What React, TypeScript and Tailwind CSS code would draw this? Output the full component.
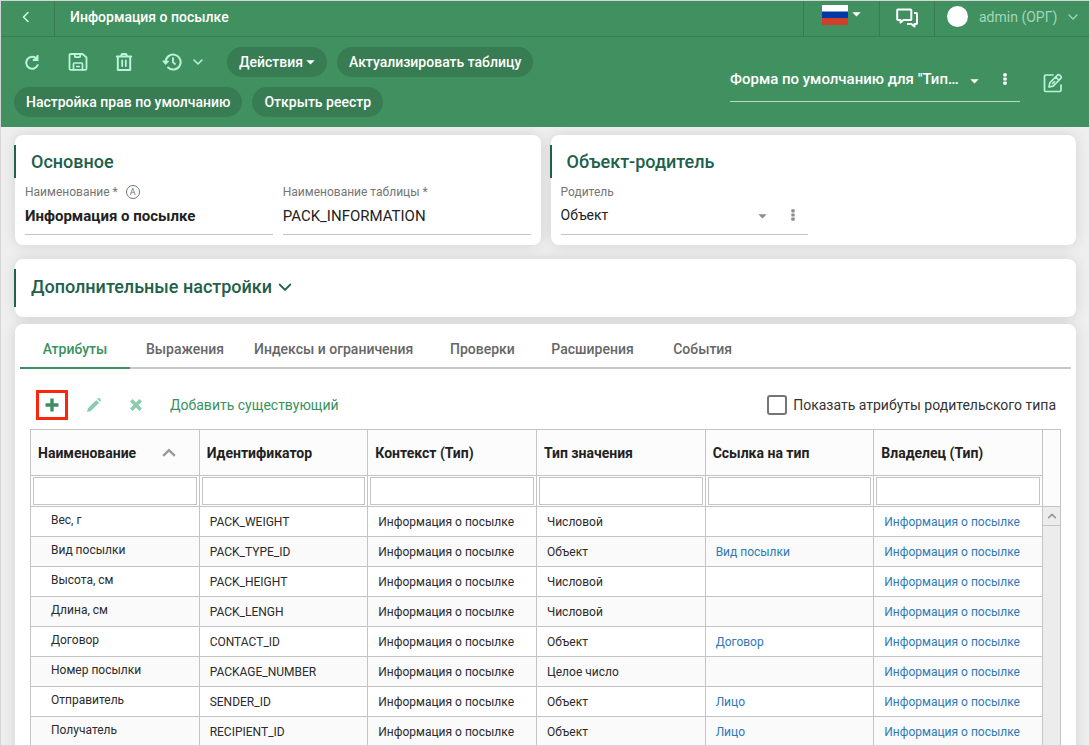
import React, { useState } from "react";

const Caret = ({ className = "" }: { className?: string }) => (
  <svg viewBox="0 0 9 5" className={`h-[5px] w-[9px] shrink-0 ${className}`} fill="currentColor" aria-hidden="true">
    <path d="M.3.300h8.400L4.500 4.600z" />
  </svg>
);

const Chevron = ({ className = "", path = "M2 4l4 4 4-4" }: { className?: string; path?: string }) => (
  <svg
    viewBox="0 0 12 12"
    className={`shrink-0 ${className}`}
    fill="none"
    stroke="currentColor"
    strokeLinecap="round"
    strokeLinejoin="round"
    aria-hidden="true"
  >
    <path d={path} />
  </svg>
);

const Dots = () => (
  <svg viewBox="0 0 4 12" className="h-3 w-1" fill="currentColor" aria-hidden="true">
    <rect x="0.3" y="0.3" width="3.4" height="3.2" rx="0.7" />
    <rect x="0.3" y="4.4" width="3.4" height="3.2" rx="0.7" />
    <rect x="0.3" y="8.5" width="3.4" height="3.2" rx="0.7" />
  </svg>
);

const stroke = {
  fill: "none",
  stroke: "currentColor",
  strokeWidth: 2,
  strokeLinecap: "round" as const,
  strokeLinejoin: "round" as const,
  "aria-hidden": true,
};

const RefreshIcon = () => (
  <svg viewBox="0 0 16 16" className="size-4" {...stroke}>
    <path d="M13.700 11.200A6 6 0 1 1 12.600 4.600" />
    <path d="M13.600 1v5H8.800" strokeLinecap="butt" strokeLinejoin="miter" strokeWidth="1.800" />
    <path d="M13.400 2.400v3.400h-3.200z" fill="currentColor" strokeWidth="1" />
  </svg>
);

const SaveIcon = () => (
  <svg viewBox="0 0 20 20" className="size-5" {...stroke}>
    <path d="M3 2h11.500L18.500 5.500V16.500a1.300 1.300 0 0 1-1.300 1.300H2.800A1.300 1.300 0 0 1 1.500 16.500V3.300A1.300 1.300 0 0 1 3 2z" strokeWidth="1.800" />
    <path d="M6.800 2v2.200a1 1 0 0 0 1 1h3.400a1 1 0 0 0 1-1V2" strokeWidth="1.700" />
    <path d="M5.500 17.500V12a1 1 0 0 1 1-1h7a1 1 0 0 1 1 1v5.500M8.800 14.500h2.400" strokeWidth="1.700" />
  </svg>
);

const TrashIcon = () => (
  <svg viewBox="0 0 18 20" className="h-5 w-[18px]" {...stroke}>
    <path d="M1.800 4.500h14.400M5.800 4.200L7 2h4l1.200 2.200M2.800 5v13h12.400V5" />
    <path d="M7.200 8.500v5.500M10.800 8.500v5.500" strokeWidth="1.800" />
  </svg>
);

const HistoryIcon = () => (
  <svg viewBox="0 0 20 18" className="h-[18px] w-5" {...stroke}>
    <path d="M3.600 9A7.500 7.500 0 1 1 6 14.600" />
    <path d="M1 8.200l2.600 2.800 2.800-2.600z" fill="currentColor" strokeWidth="1.200" />
    <path d="M11 5v4.400l2 1.600" strokeWidth="1.800" />
  </svg>
);

const ChatIcon = () => (
  <svg viewBox="0 0 24 22" className="h-[22px] w-6" fill="none" stroke="currentColor" strokeWidth="2" strokeLinejoin="round" aria-hidden="true">
    <path d="M3 2.500h12.500a.8.8 0 0 1 .8.8v8.900a.8.8 0 0 1-.8.8H8.500L5.500 15.500V13H3a.8.8 0 0 1-.8-.8V3.300A.8.8 0 0 1 3 2.500z" />
    <path d="M19 6h2.200a.8.8 0 0 1 .8.8v9.400a.8.8 0 0 1-.8.8h-1.700v2.500L16.300 17H12" />
  </svg>
);

const EditIcon = () => (
  <svg viewBox="0 0 20 20" className="size-5" {...stroke} strokeWidth={1.700}>
    <path d="M10 2H2.800A1.300 1.300 0 0 0 1.500 3.300v13.900a1.300 1.300 0 0 0 1.300 1.300h13.900a1.300 1.300 0 0 0 1.300-1.300V12" />
    <path d="M6 14l.8-4.200 7.700-7.700a1.500 1.500 0 0 1 2.100 0l1.200 1.200a1.500 1.500 0 0 1 0 2.100l-7.700 7.700zM12.800 4l3.200 3.200M9.500 10.500l2-2" strokeWidth="1.600" />
  </svg>
);

const Flag = () => (
  <svg viewBox="0 0 26 20" className="h-5 w-[26px]" aria-hidden="true">
    <rect width="26" height="7" fill="#fff" />
    <rect y="6.500" width="26" height="7" fill="#0039a6" />
    <rect y="13" width="26" height="7" fill="#d03f2b" />
  </svg>
);

const PencilIcon = () => (
  <svg viewBox="0 0 14 14" className="size-3.5" fill="currentColor" aria-hidden="true">
    <path d="M0 14l.9-3.800L9.300 1.900l2.900 2.900-8.400 8.300zM10.200 1l1-.9c.3-.2.700-.2 1 0l1.700 1.700c.2.300.2.700 0 1L13 3.800z" />
  </svg>
);

const PlusIcon = () => (
  <svg viewBox="0 0 14 14" className="size-3.5" fill="currentColor" aria-hidden="true">
    <path d="M5.300.6h3.400v4.700H13.500v3.400H8.700v4.700H5.300V8.700H.500V5.300h4.800z" />
  </svg>
);

const CrossIcon = () => (
  <svg viewBox="0 0 12 12" className="size-3" stroke="currentColor" strokeWidth="3.600" aria-hidden="true">
    <path d="M1.300 1.300l9.400 9.400M10.700 1.300l-9.400 9.400" />
  </svg>
);

const pill =
  "flex h-[30px] items-center gap-[3px] rounded-full bg-[#377c52] px-3 text-sm font-medium text-white hover:bg-[#2f6e48]";

const tabs = ["Атрибуты", "Выражения", "Индексы и ограничения", "Проверки", "Расширения", "События"];

const columns = ["Наименование", "Идентификатор", "Контекст (Тип)", "Тип значения", "Ссылка на тип", "Владелец (Тип)"];

const rows = [
  { name: "Вес, г", id: "PACK_WEIGHT", type: "Числовой", ref: "" },
  { name: "Вид посылки", id: "PACK_TYPE_ID", type: "Объект", ref: "Вид посылки" },
  { name: "Высота, см", id: "PACK_HEIGHT", type: "Числовой", ref: "" },
  { name: "Длина, см", id: "PACK_LENGH", type: "Числовой", ref: "" },
  { name: "Договор", id: "CONTACT_ID", type: "Объект", ref: "Договор" },
  { name: "Номер посылки", id: "PACKAGE_NUMBER", type: "Целое число", ref: "" },
  { name: "Отправитель", id: "SENDER_ID", type: "Объект", ref: "Лицо" },
  { name: "Получатель", id: "RECIPIENT_ID", type: "Объект", ref: "Лицо" },
];

const owner = "Информация о посылке";
const card = "rounded-[8px] bg-white shadow-[0_0_14px_rgba(0,0,0,0.12)]";
const cell = "h-[30px] border border-[#c4c4c4] px-2.5 py-0 align-middle";
const heading = "-ml-px flex items-center border-l-2 border-[#21604a] pl-[15px] text-lg font-medium text-[#21604a]";
const fieldLabel = "flex h-[26px] items-center gap-2 pt-0.5 text-xs text-[#757575]";

function TopBar() {
  return (
    <div className="flex h-9 border-b border-[#377c52]">
      <button aria-label="Назад" className="flex w-[54px] items-center justify-center border-r border-[#377c52] pr-1 pb-1 text-[#d5fbe9]">
        <Chevron path="M8 1.500L3.500 6 8 10.500" className="size-3 [stroke-width:1.500]" />
      </button>
      <h1 className="flex flex-1 items-center pb-1 pl-[15px] text-sm font-medium">Информация о посылке</h1>
      <button aria-label="Язык" className="flex w-[76px] items-center gap-1 border-l border-[#377c52] pb-2 pl-[18px]">
        <Flag />
        <Caret />
      </button>
      <button aria-label="Сообщения" className="flex w-[55px] items-center justify-center border-l border-[#377c52] pb-0.5">
        <ChatIcon />
      </button>
      <button className="flex w-[155px] items-center border-l border-[#377c52] pb-1 pl-3 text-sm text-[#a3d6bb]">
        <span className="size-[21px] rounded-full bg-white" />
        <span className="flex-1 pl-[11px] text-left whitespace-nowrap">admin (ОРГ)</span>
        <Chevron className="mr-2.5 size-3 [stroke-width:1.300]" />
      </button>
    </div>
  );
}

function Toolbar() {
  return (
    <div className="flex items-start py-2.5 pl-[13px]">
      <div className="flex max-w-[600px] flex-1 flex-wrap gap-2.5">
        <div className="flex h-[30px] w-[203px] items-center text-[#baf5db]">
          <button aria-label="Обновить" className="flex w-9 justify-center"><RefreshIcon /></button>
          <button aria-label="Сохранить" className="ml-2.5 flex w-9 justify-center"><SaveIcon /></button>
          <button aria-label="Удалить" className="ml-2.5 flex w-9 justify-center"><TrashIcon /></button>
          <button aria-label="История" className="ml-2.5 flex w-[60px] items-center gap-2.5 pl-2.5">
            <HistoryIcon />
            <Chevron className="size-3 [stroke-width:1.500]" />
          </button>
        </div>
        <button className={pill}>Действия <Caret /></button>
        <button className={pill}>Актуализировать таблицу</button>
        <div className="flex w-full gap-2.5">
          <button className={pill}>Настройка прав по умолчанию</button>
          <button className={pill}>Открыть реестр</button>
        </div>
      </div>
      <div className="ml-auto mt-2.5 flex items-center">
        <div className="flex h-[45px] w-[290px] items-center border-b border-[#b7d9c5]">
          <select aria-label="Форма" className="h-7 min-w-0 flex-1 appearance-none bg-transparent text-[15px] leading-7 font-medium outline-none">
            <option>Форма по умолчанию для "Тип…</option>
          </select>
          <Caret className="mt-1" />
          <button aria-label="Меню формы" className="ml-[11px] flex w-[30px] justify-center"><Dots /></button>
        </div>
        <button aria-label="Редактировать форму" className="flex w-[69px] justify-center pt-1.5 pr-1 text-[#baf5db]"><EditIcon /></button>
      </div>
    </div>
  );
}

function AttributesTable() {
  return (
    <table className="w-full table-fixed border-collapse text-xs text-[#2b2b2b]">
      <colgroup>
        {columns.map((c) => <col key={c} />)}
        <col className="w-[18px]" />
      </colgroup>
      <thead>
        <tr className="h-[46px] bg-[#fcfcfc] text-left text-sm">
          {columns.map((c, i) => (
            <th key={c} className="border border-[#c4c4c4] px-[7px] py-0 font-bold text-[#222]">
              <div className="flex items-center justify-between">
                {c}
                {i === 0 && <Chevron path="M1 8.500l5-5 5 5" className="mr-4 size-3.5 text-[#999] [stroke-linecap:butt] [stroke-linejoin:miter] [stroke-width:2]" />}
              </div>
            </th>
          ))}
          <th rowSpan={2} aria-label="Прокрутка" className="border border-[#c4c4c4]" />
        </tr>
        <tr className="h-[31px]">
          {columns.map((c) => (
            <td key={c} className="border border-[#c4c4c4] px-0.5 py-px">
              <input aria-label={`Фильтр: ${c}`} className="block h-7 w-full border border-[#c4c4c4] bg-white px-1 outline-none" />
            </td>
          ))}
        </tr>
      </thead>
      <tbody>
        {rows.map((r, i) => (
          <tr key={r.id} className="even:bg-[#fafafa]">
            <td className={`${cell} pb-1 pl-5`}>{r.name}</td>
            <td className={cell}>{r.id}</td>
            <td className={cell}>{owner}</td>
            <td className={cell}>{r.type}</td>
            <td className={cell}>{r.ref && <a href="#" className="text-[#2f79b5]">{r.ref}</a>}</td>
            <td className={cell}><a href="#" className="text-[#2f79b5]">{owner}</a></td>
            {i === 0 && (
              <td rowSpan={rows.length} className="border border-[#c4c4c4] bg-[#ececec] p-0 align-top">
                <button aria-label="Вверх" className="flex h-[19px] w-full items-center justify-center border-b border-[#c4c4c4] text-[#999]">
                  <Chevron path="M2 8l4-4 4 4" className="size-2.5 [stroke-width:2]" />
                </button>
              </td>
            )}
          </tr>
        ))}
      </tbody>
    </table>
  );
}

export default function App() {
  const [tab, setTab] = useState(0);
  return (
    <div className="flex h-screen flex-col overflow-hidden border border-[#d6d6d6] bg-[#efefef] font-['Roboto','Noto_Sans',sans-serif]">
      <header className="shrink-0 bg-[#419160] text-white">
        <TopBar />
        <Toolbar />
      </header>
      <main className="flex min-h-0 flex-1 flex-col overflow-hidden pt-2 pr-[13px] pl-3.5">
        <div className="grid shrink-0 grid-cols-2 gap-2.5">
          <section className={`${card} py-2.5`}>
            <h2 className={`${heading} h-[33px]`}>Основное</h2>
            <div className="grid grid-cols-2 gap-2.5 px-2.5">
              <div>
                <label htmlFor="name" className={fieldLabel}>
                  Наименование *
                  <span className="flex size-3.5 items-center justify-center rounded-full border border-[#757575] text-[9px]">A</span>
                </label>
                <input id="name" defaultValue="Информация о посылке" className="block h-[31px] w-full border-b border-[#c4c4c4] pb-1.5 text-[15px] font-bold text-[#222] outline-none" />
              </div>
              <div>
                <label htmlFor="table-name" className={fieldLabel}>Наименование таблицы *</label>
                <input id="table-name" defaultValue="PACK_INFORMATION" className="block h-[31px] w-full border-b border-[#c4c4c4] pb-1.5 text-[15px] text-[#222] outline-none" />
              </div>
            </div>
          </section>
          <section className={`${card} py-2.5`}>
            <h2 className={`${heading} h-[33px]`}>Объект-родитель</h2>
            <div className="grid grid-cols-2 gap-2.5 px-2.5">
              <div>
                <label htmlFor="parent" className={fieldLabel}>Родитель</label>
                <div className="flex h-[31px] items-center border-b border-[#c4c4c4] pb-2 text-[#8c8c8c]">
                  <select id="parent" className="min-w-0 flex-1 appearance-none bg-transparent text-sm text-[#222] outline-none">
                    <option>Объект</option>
                  </select>
                  <Caret className="mt-0.5" />
                  <button aria-label="Меню" className="ml-[11px] flex w-[30px] justify-center"><Dots /></button>
                </div>
              </div>
            </div>
          </section>
        </div>

        <section className={`${card} mt-3.5 shrink-0 py-2.5`}>
          <h2 className={`${heading} h-[38px] pb-0.5`}>
            <button className="flex items-center gap-1.5">
              Дополнительные настройки
              <Chevron path="M1.500 4L6 8.500 10.500 4" className="size-3.5 [stroke-width:1.700]" />
            </button>
          </h2>
        </section>

        <section className={`${card} mt-[7px] shrink-0 pb-5`}>
          <div role="tablist" className="mx-[5px] flex border-b-2 border-[#c8c8c8] pt-[5px]">
            {tabs.map((t, i) => (
              <button
                key={t}
                role="tab"
                aria-selected={i === tab}
                onClick={() => setTab(i)}
                className={`-mb-0.5 h-10 min-w-[110px] border-b-2 px-3.5 pt-0.5 text-sm font-medium ${
                  i === tab ? "border-[#3a9160] text-[#3a9160]" : "border-transparent text-[#666]"
                }`}
              >
                {t}
              </button>
            ))}
          </div>
          <div className="flex h-[60px] items-center pt-3 pr-5 pl-[21px] text-sm">
            <button aria-label="Добавить" className="flex h-[30px] w-8 items-center justify-center border-[3px] border-[#f9280c] text-[#3a9160]"><PlusIcon /></button>
            <button aria-label="Изменить" className="ml-[18px] flex w-4 justify-center text-[#8accae]"><PencilIcon /></button>
            <button aria-label="Удалить атрибут" className="ml-[26px] flex w-4 justify-center text-[#8accae]"><CrossIcon /></button>
            <button className="ml-[26px] text-[#3a9160]">Добавить существующий</button>
            <label className="ml-auto flex items-center gap-1.5 text-[#333]">
              <input type="checkbox" className="size-5 appearance-none rounded-[3px] border-2 border-[#757575] bg-white checked:bg-[#3a9160]" />
              Показать атрибуты родительского типа
            </label>
          </div>
          <div className="px-[15px]">
            <AttributesTable />
          </div>
        </section>
      </main>
    </div>
  );
}
